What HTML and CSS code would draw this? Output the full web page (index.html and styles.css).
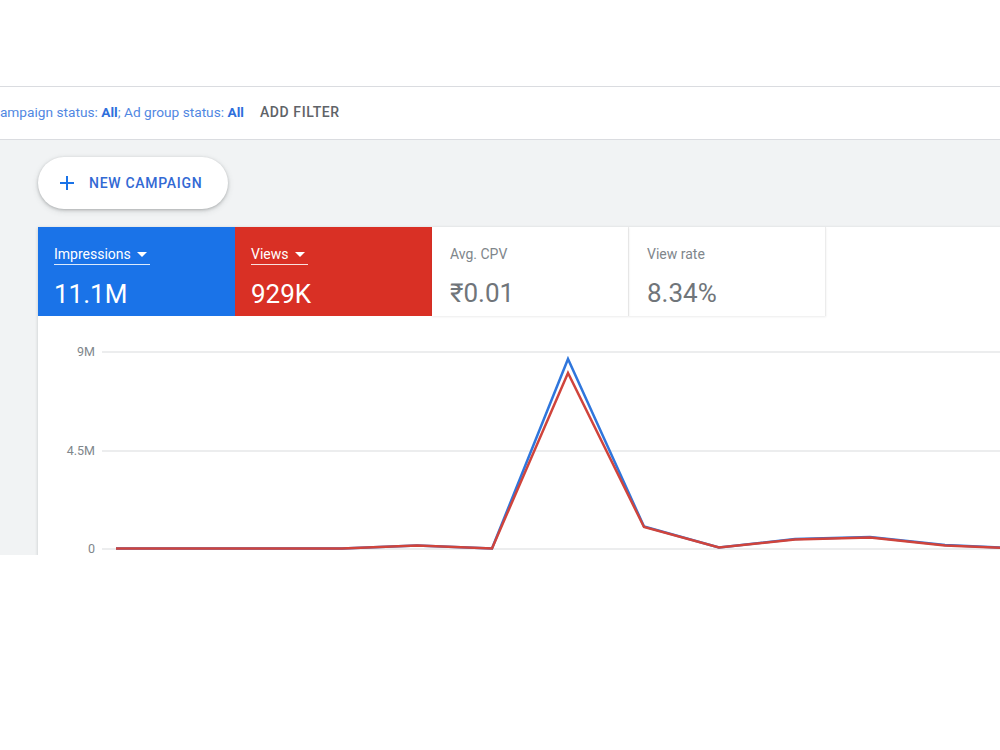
FILE: index.html
```html
<!DOCTYPE html>
<html lang="en">
<head>
  <meta charset="UTF-8" />
  <meta name="viewport" content="width=device-width, initial-scale=1.0"/>
  <title>Campaigns - Overview</title>
  <link rel="stylesheet" href="styles.css">
</head>
<body>

  <div class="topband"></div>

  <div class="frame">
    <!-- Filter row -->
    <div class="filterbar">
      <span class="filters">Campaign status: <b>All</b>; Ad group status: <b>All</b></span>
      <span class="addfilter">ADD FILTER</span>
    </div>

    <div class="main">
      <button class="newbtn" type="button">
        <svg class="plus" width="16" height="16" viewBox="0 0 16 16">
          <path d="M8 1v14M1 8h14" stroke="#1a73e8" stroke-width="2" fill="none"/>
        </svg>
        NEW CAMPAIGN
      </button>

      <div class="card">
        <div class="tiles">
          <div class="tile tile-blue">
            <div class="label">Impressions <span class="caret"></span></div>
            <div class="value">11.1M</div>
          </div>
          <div class="tile tile-red">
            <div class="label">Views <span class="caret"></span></div>
            <div class="value">929K</div>
          </div>
          <div class="tile tile-plain">
            <div class="label">Avg. CPV</div>
            <div class="value">₹0.01</div>
          </div>
          <div class="tile tile-plain">
            <div class="label">View rate</div>
            <div class="value">8.34%</div>
          </div>
        </div>

        <div class="chart">
          <svg width="1000" height="240" viewBox="0 0 1000 240">
            <g class="grid">
              <line x1="64" y1="36" x2="1000" y2="36"/>
              <line x1="64" y1="135" x2="1000" y2="135"/>
              <line x1="64" y1="233" x2="1000" y2="233"/>
            </g>
            <g class="axis">
              <text x="57" y="40">9M</text>
              <text x="57" y="139">4.5M</text>
              <text x="57" y="236.5">0</text>
            </g>
            <polyline class="series-blue" points="78,232.5 153,232.5 229,232.5 304,232.5 379,229.5 454,232.5 530,43 606,210.5 681,231.5 757,223 832,221 907,229 982,232.5 1058,232.5"/>
            <polyline class="series-red" points="78,232.5 153,232.5 229,232.5 304,232.5 379,229.5 454,232.5 530,57 606,211 681,231.5 757,223.5 832,221.5 907,229.5 982,232.5 1058,232.5"/>
          </svg>
        </div>
      </div>
    </div>
  </div>

</body>
</html>
```

FILE: styles.css
```css
/* General styling */
body {
  font-family: Roboto, 'Liberation Sans', sans-serif;
  margin: 0;
  padding: 0;
  background: #fff;
  overflow: hidden;
}

.topband {
  height: 86px;
  border-bottom: 1px solid #dadce0;
}

/* the cropped screen area */
.frame {
  height: 468px;
  overflow: hidden;
}

.filterbar {
  height: 53px;
  box-sizing: border-box;
  padding-bottom: 3px;
  display: flex;
  align-items: center;
  gap: 16px;
  border-bottom: 1px solid #dadce0;
  font-size: 14px;
  white-space: nowrap;
}

.filters {
  margin-left: -9px;
  font-size: 13.7px;
  color: #5187e2;
}

.filters b {
  color: #2f6fdc;
  font-weight: 700;
}

.addfilter {
  color: #5f6368;
  font-weight: 500;
  letter-spacing: 0.6px;
}

.main {
  background: #f1f3f4;
  padding: 17px 0 0 38px;
  height: 100%;
}

.newbtn {
  display: flex;
  align-items: center;
  gap: 14px;
  height: 52px;
  padding: 0 26px 0 21px;
  border: none;
  border-radius: 26px;
  background: #fff;
  box-shadow: 0 1px 3px rgba(60, 64, 67, 0.3), 0 2px 6px rgba(60, 64, 67, 0.15);
  font-family: inherit;
  font-size: 14px;
  font-weight: 500;
  letter-spacing: 0.7px;
  color: #3269d4;
  cursor: pointer;
}

.card {
  margin-top: 18px;
  width: 1000px;
  background: #fff;
  box-shadow: 0 1px 3px rgba(60, 64, 67, 0.25);
}

.tiles {
  display: flex;
}

.tile {
  width: 197px;
  height: 89px;
  box-sizing: border-box;
  padding: 17px 0 0 16px;
}

.tile-blue {
  background: #1a73e8;
  color: #fff;
}

.tile-red {
  background: #d93025;
  color: #fff;
}

.tile-plain {
  padding-left: 18px;
  color: #70757a;
  border-right: 1px solid #ececec;
  box-shadow: 0 1px 2px rgba(0, 0, 0, 0.08);
}

.label {
  display: inline-flex;
  align-items: center;
  height: 20px;
  font-size: 14px;
  line-height: 20px;
}

.tile-blue .label,
.tile-red .label {
  padding-right: 3px;
  border-bottom: 1px solid rgba(255, 255, 255, 0.85);
}

.tile-plain .label {
  color: #80868b;
}

.caret {
  width: 0;
  height: 0;
  margin-left: 6px;
  border-left: 5px solid transparent;
  border-right: 5px solid transparent;
  border-top: 5px solid #fff;
}

.value {
  margin-top: 13px;
  font-size: 26px;
  line-height: 32px;
}

.chart svg {
  display: block;
}

.grid line {
  stroke: #e6e7e9;
  stroke-width: 1.5;
}

.axis text {
  font-family: Roboto, 'Liberation Sans', sans-serif;
  font-size: 12.5px;
  fill: #80868b;
  text-anchor: end;
}

.series-blue,
.series-red {
  fill: none;
  stroke-width: 2.5;
  stroke-linejoin: miter;
}

.series-blue {
  stroke: #2f76dc;
}

.series-red {
  stroke: #d0443c;
}
```
